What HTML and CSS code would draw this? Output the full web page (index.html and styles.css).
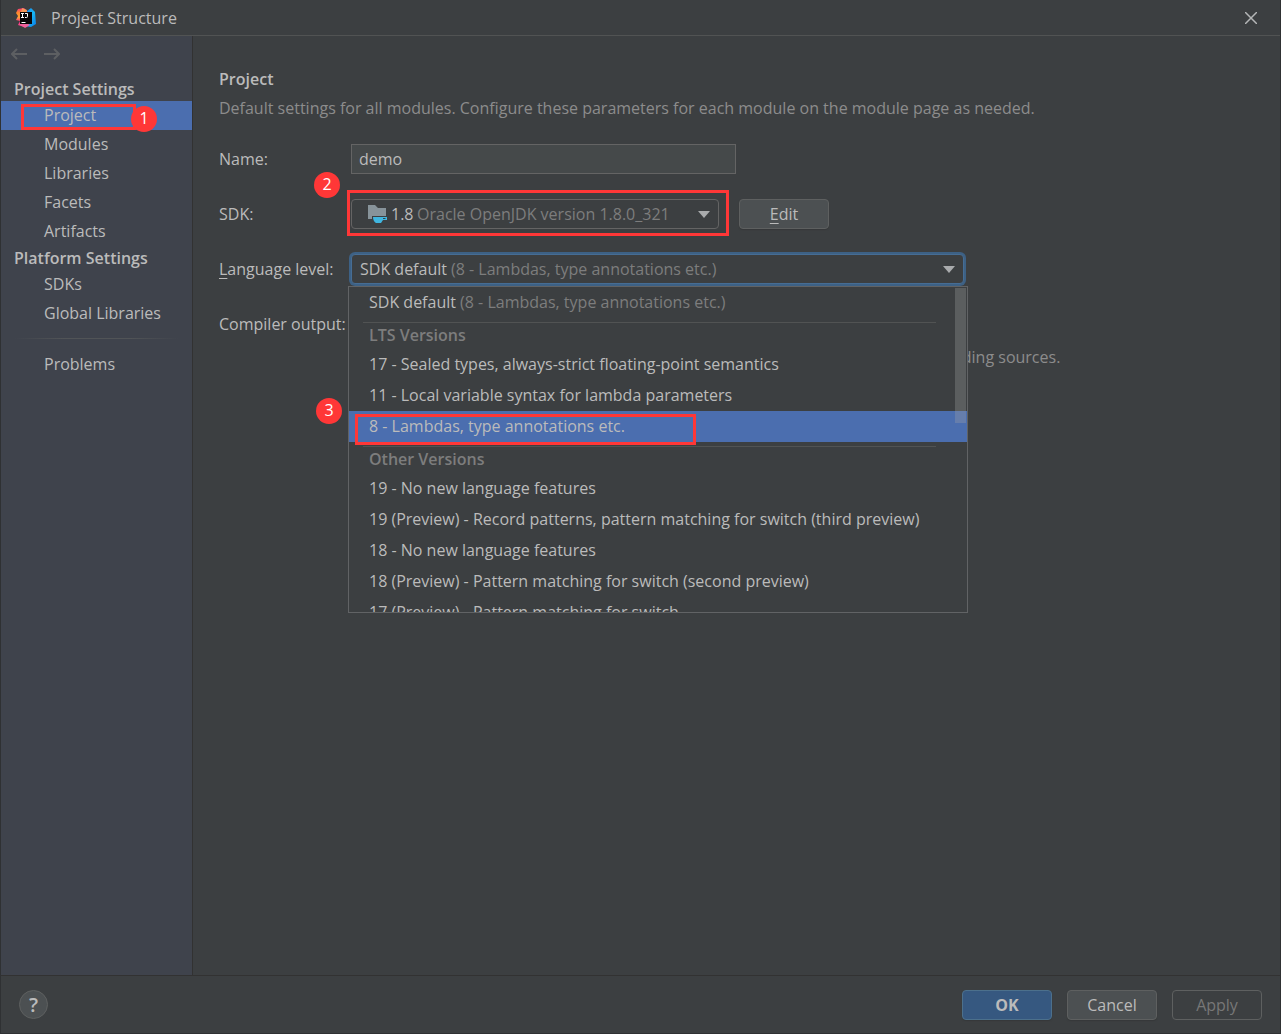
FILE: index.html
```html
<!DOCTYPE html>
<html lang="en">
<head>
<meta charset="utf-8">
<meta name="viewport" content="width=device-width, initial-scale=1">
<title>Project Structure</title>
<link rel="stylesheet" href="styles.css">
</head>
<body>
<div class="dialog">
  <header class="titlebar">
    <svg class="logo" viewBox="0 0 20 20" aria-hidden="true">
      <defs>
        <linearGradient id="lg-left" x1="0" y1="0" x2="0" y2="1"><stop offset="0" stop-color="#f5317f"/><stop offset=".25" stop-color="#ff8a2b"/><stop offset=".5" stop-color="#ffa03a"/><stop offset=".7" stop-color="#f5317f"/><stop offset="1" stop-color="#ff4a8a"/></linearGradient>
        <linearGradient id="lg-right" x1="0" y1="0" x2="1" y2="1"><stop offset="0" stop-color="#1679f0"/><stop offset=".5" stop-color="#18b7f2"/><stop offset="1" stop-color="#0a7be8"/></linearGradient>
      </defs>
      <path d="M2 1 8 0 12 4 10 18 8 19 2 17 4 13 0 12 2 8 0 5Z" fill="url(#lg-left)"/>
      <path d="M6 0 11 2 10 6 5 5Z" fill="#f79a5a"/>
      <path d="M11 3 15 0 19 4 20 16 15 19 9 18 10 12Z" fill="url(#lg-right)"/>
      <path d="M3 16 8 14 14 17 9 20Z" fill="#f0609a"/>
      <path d="M4 4H16V16H4Z" fill="#090607"/>
      <path d="M5 5.500H8M6.500 5.500V9.500M5 9.500H8M9 5.500H11.500V8.500Q11.500 9.500 10.500 9.500H9M5.500 14.500H9.500" fill="none" stroke="#fff" stroke-width="1"/>
    </svg>
    <h1 class="titlebar-text">Project Structure</h1>
    <button class="close" aria-label="Close"><svg viewBox="0 0 12 12"><path d="M0 0 12 12M12 0 0 12"/></svg></button>
  </header>

  <div class="content">
    <nav class="sidebar">
      <div class="history">
        <button aria-label="Back"><svg viewBox="0 0 16 12"><path d="M16 6H1M6 1 1 6 6 11"/></svg></button>
        <button aria-label="Forward"><svg viewBox="0 0 16 12"><path d="M0 6H15M10 1 15 6 10 11"/></svg></button>
      </div>
      <h2 class="group">Project Settings</h2>
      <ul class="items">
        <li class="selected"><a href="#project">Project</a><span class="mark mark-project"></span><span class="badge badge-1">1</span></li>
        <li><a href="#modules">Modules</a></li>
        <li><a href="#libraries">Libraries</a></li>
        <li><a href="#facets">Facets</a></li>
        <li><a href="#artifacts">Artifacts</a></li>
      </ul>
      <h2 class="group">Platform Settings</h2>
      <ul class="items">
        <li><a href="#sdks">SDKs</a></li>
        <li><a href="#global">Global Libraries</a></li>
      </ul>
      <hr class="divider">
      <ul class="items">
        <li><a href="#problems">Problems</a></li>
      </ul>
    </nav>

    <main class="page">
      <h2 class="heading">Project</h2>
      <p class="description">Default settings for all modules. Configure these parameters for each module on the module page as needed.</p>

      <form class="form">
        <div class="row">
          <label for="name">Name:</label>
          <input class="field" id="name" type="text" value="demo">
        </div>
        <div class="row">
          <label for="sdk">SDK:</label>
          <div class="combo combo-sdk">
            <select id="sdk"><option>1.8</option></select>
            <svg class="sdk-icon" viewBox="0 0 20 18" aria-hidden="true">
              <path d="M0 0H7L10 3H18V11H4V14H0Z" fill="#87939a"/>
              <path d="M5 12H19V15H15L13 18H8Q5 16 5 12Z" fill="#40b6e0"/>
              <path d="M15 13H17.500V14H15Z" fill="#3c3f41"/>
            </svg>
            <span class="combo-hint">Oracle OpenJDK version 1.8.0_321</span>
            <svg class="arrow" viewBox="0 0 12 7" aria-hidden="true"><path d="M0 0H12L6 7Z"/></svg>
            <span class="mark mark-sdk"></span>
            <span class="badge badge-2">2</span>
          </div>
          <button class="btn" type="button"><span><u>E</u>dit</span></button>
        </div>
        <div class="row">
          <label for="level"><u>L</u>anguage level:</label>
          <div class="combo combo-level">
            <select id="level"><option>SDK default</option></select>
            <span class="combo-hint">(8 - Lambdas, type annotations etc.)</span>
            <svg class="arrow" viewBox="0 0 12 7" aria-hidden="true"><path d="M0 0H12L6 7Z"/></svg>
            <div class="popup">
              <ul class="options" role="listbox" aria-label="Language level">
                <li role="option">SDK default <span class="muted">(8 - Lambdas, type annotations etc.)</span></li>
                <li class="section" role="presentation">LTS Versions</li>
                <li role="option">17 - Sealed types, always-strict floating-point semantics</li>
                <li role="option">11 - Local variable syntax for lambda parameters</li>
                <li class="active" role="option" aria-selected="true">8 - Lambdas, type annotations etc.</li>
                <li class="section" role="presentation">Other Versions</li>
                <li role="option">19 - No new language features</li>
                <li role="option">19 (Preview) - Record patterns, pattern matching for switch (third preview)</li>
                <li role="option">18 - No new language features</li>
                <li role="option">18 (Preview) - Pattern matching for switch (second preview)</li>
                <li role="option">17 (Preview) - Pattern matching for switch</li>
              </ul>
              <span class="thumb"></span>
              <span class="mark mark-option"></span>
            </div>
            <span class="badge badge-3">3</span>
          </div>
        </div>
        <div class="row">
          <label for="output">Compiler output:</label>
          <input class="field" id="output" type="text">
        </div>
        <p class="note">Used for module subdirectories, Production and Test directories for the corresponding sources.</p>
      </form>
    </main>
  </div>

  <footer class="footer">
    <button class="help" aria-label="Help">?</button>
    <button class="btn btn-primary">OK</button>
    <button class="btn">Cancel</button>
    <button class="btn" disabled>Apply</button>
  </footer>
</div>
</body>
</html>
```
FILE: styles.css
```css
* { box-sizing: border-box; }

body {
  margin: 0;
  background: #3c3f41;
  color: #bbbbbb;
  font: 16px/20px "Open Sans", "Noto Sans", sans-serif;
}

h1, h2, p, ul { margin: 0; padding: 0; font-size: inherit; }
h2 { font-weight: 600; }
ul { list-style: none; }
a { color: inherit; text-decoration: none; }
button, input, select { font: inherit; color: inherit; margin: 0; }
svg { display: block; }
u { text-underline-offset: 3px; }

.dialog {
  display: flex;
  flex-direction: column;
  min-height: 100vh;
  border: 1px solid #2f3133;
  border-top: 0;
}

/* Title bar */
.titlebar {
  display: flex;
  align-items: center;
  height: 36px;
  padding: 0 23px 0 15px;
  border-bottom: 1px solid #515353;
}
.logo { width: 20px; height: 20px; }
.titlebar-text { flex: 1; margin-left: 15px; font-weight: 400; }
.close { padding: 0; border: 0; background: none; }
.close svg { width: 12px; height: 12px; stroke: #b4b6b7; stroke-width: 1.5; }

.content { display: flex; flex: 1; }

/* Sidebar */
.sidebar {
  width: 192px;
  background: #3f434c;
  border-right: 1px solid #323232;
}
.history { display: flex; align-items: center; gap: 17px; height: 36px; padding: 0 10px; margin-bottom: 5px; }
.history button { padding: 0; border: 0; background: none; }
.history svg {
  width: 16px;
  height: 12px;
  fill: none;
  stroke: #5d5f62;
  stroke-width: 2;
}
.group { padding-left: 13px; line-height: 24px; }
.items li { position: relative; }
.items a { display: block; padding-left: 43px; line-height: 29px; }
.selected { background: #4b6eaf; }
.divider {
  height: 1px;
  margin: 10px 13px 11px;
  border: 0;
  background: linear-gradient(90deg, transparent, #515457 30%, #515457 70%, transparent);
}

/* Page */
.page { flex: 1; padding: 33px 26px; }
.heading { line-height: 20px; }
.description { margin-top: 9px; color: #8c8c8c; }
.form { display: flex; flex-direction: column; gap: 25px; margin-top: 26px; }
.row { display: flex; align-items: center; height: 30px; }
.row label { width: 132px; white-space: nowrap; }
.field {
  width: 385px;
  height: 30px;
  padding: 0 7px;
  border: 1px solid #646464;
  background: #45494a;
  outline: 0;
}
.note { margin: -17px 0 0 130px; color: #8c8c8c; }

.combo { position: relative; display: grid; align-items: center; height: 30px; }
.combo > select, .combo > .combo-hint, .combo > .arrow, .combo > .sdk-icon { grid-area: 1 / 1; }
.combo select {
  width: 100%;
  height: 30px;
  padding: 0 8px;
  appearance: none;
  border: 1px solid #646464;
  border-radius: 4px;
  background: #3c3f41;
  outline: 0;
}
.combo-hint { color: #7d7d7d; pointer-events: none; }
.arrow { justify-self: end; width: 12px; height: 7px; margin-right: 9px; fill: #a9abad; pointer-events: none; }
.combo-sdk { width: 368px; margin-right: 20px; }
.combo-sdk select { padding-left: 39px; }
.combo-sdk .combo-hint { padding-left: 66px; }
.sdk-icon { width: 20px; height: 18px; margin-left: 17px; pointer-events: none; }
.combo-level { width: 613px; }
.combo-level select { border-color: #466d94; box-shadow: 0 0 0 2px #3d6185; }
.combo-level .combo-hint { padding-left: 100px; }

/* Language level popup */
.popup {
  position: absolute;
  top: 32px;
  left: -3px;
  width: 620px;
  height: 327px;
  border: 1px solid #616365;
  background: #3c3f41;
  z-index: 1;
}
.options { height: 100%; overflow: hidden; }
.options li { padding-left: 20px; line-height: 31px; white-space: nowrap; }
.options .active { background: #4b6eaf; }
.options .section {
  height: 31px;
  margin: 0 31px 0 14px;
  padding: 4px 0 0 6px;
  color: #7d7d7d;
  font-weight: 600;
  line-height: 26px;
  background: linear-gradient(#515353, #515353) 0 4px / 100% 1px no-repeat;
}
.muted { color: #7d7d7d; }
.thumb {
  position: absolute;
  top: 1px;
  right: 1px;
  width: 11px;
  height: 135px;
  background: rgba(166, 166, 166, .3);
}

/* Step annotations */
.mark { position: absolute; border: 3px solid #ff3737; pointer-events: none; }
.mark-project { top: 3px; left: 20px; width: 115px; height: 26px; }
.mark-sdk { inset: -9px -10px -7px -4px; }
.mark-option { top: 127px; left: 6px; width: 341px; height: 31px; }
.badge {
  position: absolute;
  width: 26px;
  height: 26px;
  border-radius: 50%;
  background: #ff3737;
  color: #fff;
  line-height: 24px;
  text-align: center;
}
.badge-1 { top: 5px; left: 130px; }
.badge-2 { top: -27px; left: -37px; }
.badge-3 { top: 144px; left: -35px; }

/* Buttons */
.btn {
  width: 90px;
  height: 30px;
  padding: 0;
  border: 1px solid #5e6060;
  border-radius: 4px;
  background: #4c5052;
  box-shadow: 0 1px 1px #36383a;
}
.btn-primary { border-color: #4c708c; background: #365880; font-weight: 700; }
.btn:disabled { background: none; color: #777777; box-shadow: none; }

.footer {
  display: flex;
  align-items: center;
  gap: 15px;
  height: 58px;
  padding: 0 18px;
  border-top: 1px solid #323232;
}
.help {
  width: 29px;
  height: 29px;
  margin-right: auto;
  padding: 0;
  border: 1px solid #5e6060;
  border-radius: 50%;
  background: #4c5052;
  font-size: 20px;
  font-weight: 600;
}
```
